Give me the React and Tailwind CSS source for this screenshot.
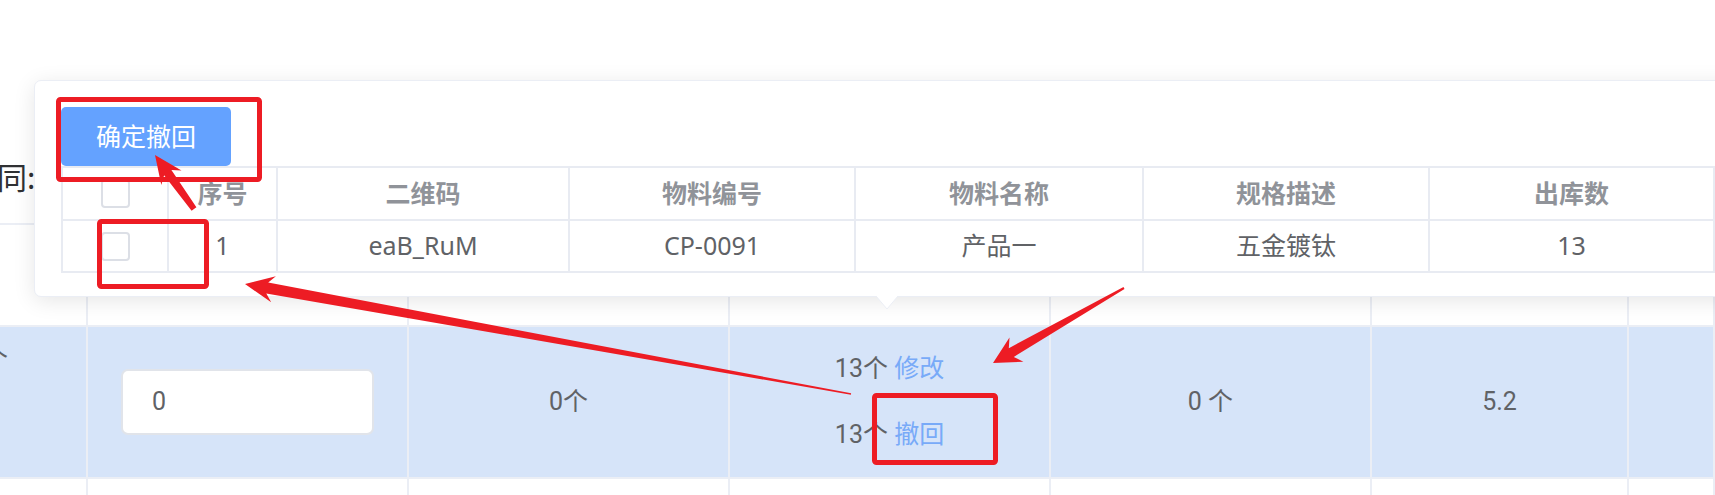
import React from "react";

const arrowPoints = (tail, tip, L, W, s, t) => {
  const dx = tip[0] - tail[0];
  const dy = tip[1] - tail[1];
  const len = Math.hypot(dx, dy);
  const ux = dx / len;
  const uy = dy / len;
  const nx = -uy;
  const ny = ux;
  const base = [tip[0] - ux * L, tip[1] - uy * L];
  const neck = [tip[0] - ux * L * 0.78, tip[1] - uy * L * 0.78];
  const p = (pt, k) => `${(pt[0] + nx * k).toFixed(1)},${(pt[1] + ny * k).toFixed(1)}`;
  return [p(tail, t), p(neck, s), p(base, W), `${tip[0]},${tip[1]}`, p(base, -W), p(neck, -s), p(tail, -t)].join(" ");
};

const Checkbox = () => (
  <span className="block w-[29px] h-[29px] rounded-[4px] border-2 border-[#dcdfe6] bg-white" />
);

const popCols = [
  { title: "", value: null },
  { title: "序号", value: "1" },
  { title: "二维码", value: "eaB_RuM" },
  { title: "物料编号", value: "CP-0091" },
  { title: "物料名称", value: "产品一" },
  { title: "规格描述", value: "五金镀钛" },
  { title: "出库数", value: "13" },
];

const Popover = () => (
  <div className="absolute left-[34px] top-[80px] w-[1760px] rounded-[7px] border border-[#ebeef5] bg-white px-[26px] pt-[26px] pb-[23px] shadow-[0_4px_21px_rgba(0,0,0,0.1)] font-['Noto_Sans','Noto_Sans_CJK_SC',sans-serif] text-[25px]">
    <button className="flex w-[170px] h-[59px] items-center justify-center rounded-[5px] bg-[#64a2ff] text-white leading-none">
      确定撤回
    </button>
    <div className="grid w-max grid-cols-[106px_109px_292px_286px_288px_286px_285px] border-t-2 border-l-2 border-[#e8ebf2]">
      {popCols.map((c, i) => (
        <div
          key={"h" + i}
          className="flex h-[53px] items-center justify-center border-r-2 border-b-2 border-[#e8ebf2] font-bold text-[#909399]"
        >
          {i === 0 ? <Checkbox /> : c.title}
        </div>
      ))}
      {popCols.map((c, i) => (
        <div
          key={"b" + i}
          className="flex h-[52px] items-center justify-center border-r-2 border-b-2 border-[#e8ebf2] text-[#606266]"
        >
          {i === 0 ? <Checkbox /> : c.value}
        </div>
      ))}
    </div>
    <svg className="absolute left-[841px] top-full" width="22" height="14" viewBox="0 0 22 14">
      <polygon points="0,0 22,0 11,13" fill="#ffffff" />
      <path d="M0,0 L11,13 L22,0" fill="none" stroke="#ebeef5" strokeWidth="1" />
    </svg>
  </div>
);

const cell = "border-r-2 border-[#ebeef5]";

const Annotations = () => (
  <svg className="pointer-events-none absolute left-0 top-0" width="1715" height="495" viewBox="0 0 1715 495">
    <g fill="none" stroke="#ed1c24" strokeWidth="5">
      <rect x="58.5" y="99.5" width="201" height="80" rx="2" />
      <rect x="99.5" y="221.5" width="107" height="65" rx="2" />
      <rect x="874.5" y="395.5" width="121" height="67" rx="2" />
    </g>
    <g fill="#ed1c24">
      <polygon points={arrowPoints([194, 209], [155, 155], 28, 12.5, 4.5, 3)} />
      <polygon points={arrowPoints([1124, 288], [993, 363], 27, 14, 5, 1)} />
      <polygon points={arrowPoints([851, 394], [245, 284], 29, 13.2, 5.5, 0.7)} />
    </g>
  </svg>
);

const App = () => {
  return (
    <div className="relative w-[1715px] h-[495px] overflow-hidden bg-white font-['Roboto','Noto_Sans_CJK_SC',sans-serif] text-[25px] text-[#606266]">
      <div className="h-[223px] pt-[158px]">
        <div className="ml-[-33px] flex items-center text-[30px] leading-[36px] text-[#303133] font-['Noto_Sans_CJK_SC',sans-serif]">
          合同:
        </div>
      </div>
      <div className="border-t-2 border-[#ebeef5]">
        <div className="grid h-[102px] grid-cols-[88px_321px_321px_321px_321px_257px_1fr] border-b-2 border-[#ebeef5]">
          {[0, 1, 2, 3, 4, 5, 6].map((i) => (
            <div key={i} className={cell} />
          ))}
        </div>
        <div className="grid h-[152px] grid-cols-[88px_321px_321px_321px_321px_257px_1fr] border-b-2 border-[#ebeef5] bg-[#d6e4f9] leading-[30px]">
          <div className={`${cell} flex justify-end overflow-hidden pt-[17px] pr-[78px] whitespace-nowrap`}>
            13个
          </div>
          <div className={`${cell} flex items-center px-[33px]`}>
            <div className="flex h-[66px] w-full items-center rounded-[7px] border-2 border-[#e1e4ea] bg-white pl-[29px]">
              0
            </div>
          </div>
          <div className={`${cell} flex items-center justify-center`}>0个</div>
          <div className={`${cell} flex flex-col items-center justify-center`}>
            <div className="flex h-[66px] items-center">
              13个&nbsp;<span className="text-[#78aaf8]">修改</span>
            </div>
            <div className="flex h-[66px] items-center">
              13个&nbsp;<span className="text-[#78aaf8]">撤回</span>
            </div>
          </div>
          <div className={`${cell} flex items-center justify-center`}>0 个</div>
          <div className={`${cell} flex items-center justify-center`}>5.2</div>
          <div className={cell} />
        </div>
        <div className="grid h-[40px] grid-cols-[88px_321px_321px_321px_321px_257px_1fr]">
          {[0, 1, 2, 3, 4, 5, 6].map((i) => (
            <div key={i} className={cell} />
          ))}
        </div>
      </div>
      <Popover />
      <Annotations />
    </div>
  );
};

export default App;
